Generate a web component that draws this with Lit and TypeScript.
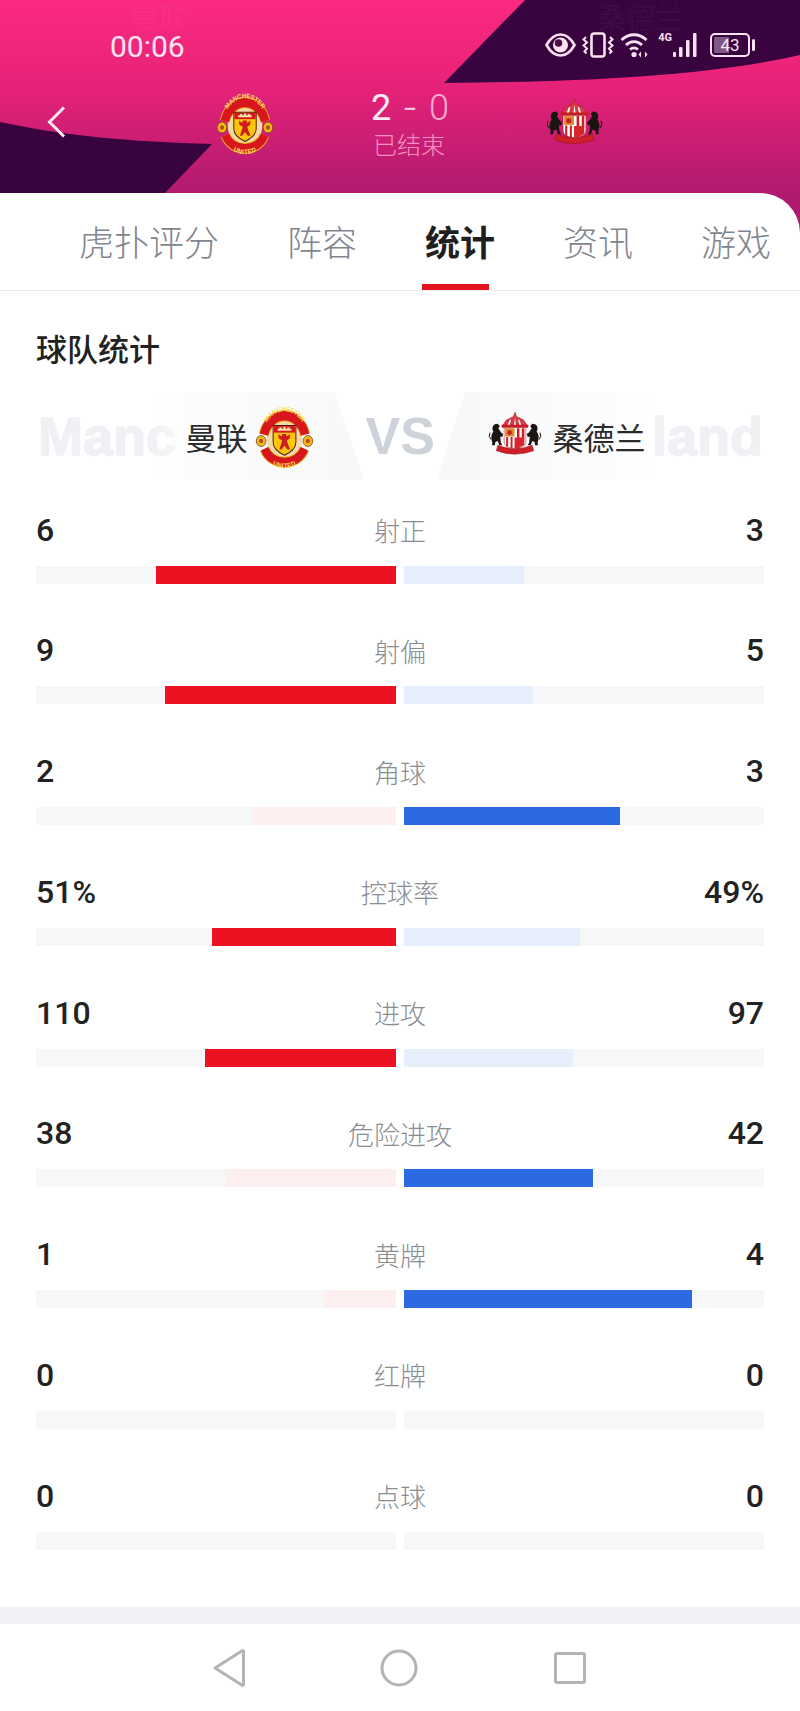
import { LitElement, html, css, svg } from "lit";
import { customElement } from "lit/decorators.js";

const STATS: [string, string, string][] = [
  ["6", "射正", "3"],
  ["9", "射偏", "5"],
  ["2", "角球", "3"],
  ["51%", "控球率", "49%"],
  ["110", "进攻", "97"],
  ["38", "危险进攻", "42"],
  ["1", "黄牌", "4"],
  ["0", "红牌", "0"],
  ["0", "点球", "0"],
];

const muCrest = (id: string) => html`<svg class="crest square" viewBox="0 3 100 88" preserveAspectRatio="none" aria-hidden="true">
  <defs>
    <path id="${id}a" d="M13 47 A37 39 0 0 1 87 47"></path>
    <path id="${id}b" d="M12 62 A38 34 0 0 0 88 62"></path>
  </defs>
  <path d="M9 38 A44 44 0 0 1 91 38" fill="none" stroke="#c9a23a" stroke-width="3" stroke-dasharray="1.500 3"></path>
  <ellipse cx="50" cy="50" rx="31" ry="36" fill="#f4d9a6"></ellipse>
  <path d="M14 44 A37 38 0 0 1 86 44" fill="none" stroke="#e8b322" stroke-width="18"></path>
  <path d="M14 44 A37 38 0 0 1 86 44" fill="none" stroke="#d8161e" stroke-width="15"></path>
  <path d="M15 66 A37 31 0 0 0 85 66" fill="none" stroke="#e8b322" stroke-width="17"></path>
  <path d="M15 66 A37 31 0 0 0 85 66" fill="none" stroke="#d8161e" stroke-width="14"></path>
  <circle cx="9" cy="54" r="8.500" fill="#f0b915" stroke="#7a3d10" stroke-width="1.200"></circle>
  <circle cx="91" cy="54" r="8.500" fill="#f0b915" stroke="#7a3d10" stroke-width="1.200"></circle>
  <circle cx="9" cy="54" r="3.500" fill="#b5481a"></circle>
  <circle cx="91" cy="54" r="3.500" fill="#b5481a"></circle>
  <text font-size="10.500" font-weight="700" fill="#ffe05a" font-family="Liberation Sans, sans-serif"><textPath href="#${id}a" startOffset="50%" text-anchor="middle">MANCHESTER</textPath></text>
  <text font-size="10.500" font-weight="700" fill="#ffe05a" font-family="Liberation Sans, sans-serif" letter-spacing=".8"><textPath href="#${id}b" startOffset="50%" text-anchor="middle">UNITED</textPath></text>
  <path d="M30 30 H70 V56 Q70 68 50 76 Q30 68 30 56 Z" fill="#fbc70b" stroke="#4a1208" stroke-width="1.600"></path>
  <path d="M31 31 H69 V41 H31 Z" fill="#d8161e"></path>
  <path d="M38 38 h24 v-3 h-3 v-2 h-4 v2 h-3 v-3 h-4 v3 h-3 v-2 h-4 v2 h-3 Z" fill="#fbe7a8"></path>
  <path d="M46 43 h7 l1 4 l6 -4 l-1 7 l-5 3 l2 6 l4 8 h-5 l-5 -6 l-5 6 h-4 l3 -8 l2 -6 l-6 -3 l-1 -7 l6 4 Z" fill="#d21b1f"></path>
</svg>`;

const sunCrest = () => html`<svg class="crest" viewBox="0 0 110 88" aria-hidden="true">
  <path d="M55 0 L58 9 L72 16 L80 27 H30 L38 16 L52 9 Z" fill="#d83a45" stroke="#a8141f" stroke-width="1"></path>
  <path d="M44 16h3l-3 11h-4zM55 11l2 16h-4zM64 16h-3l3 11h4z" fill="#fff"></path>
  <rect x="28" y="26" width="54" height="6" rx="1" fill="#c81d25"></rect>
  <path d="M33 32 H77 V62 Q77 72 55 76 Q33 72 33 62 Z" fill="#fff" stroke="#a8141f" stroke-width="1"></path>
  <path d="M35 33 H54 V50 H35 Z" fill="#e08a2a"></path>
  <circle cx="44" cy="42" r="5" fill="#c81d25"></circle>
  <path d="M59 33h5v40h-5zM69 33h5v34h-5zM37 51h4v20h-4zM46 51h4v23h-4z" fill="#cf1c25"></path>
  <path d="M54 52h19v16q-8 6 -19 7z" fill="#d8262d"></path>
  <path d="M9 62 C5 52 7 44 11 40 C8 36 8 28 14 25 L20 24 L24 29 L21 33 C24 38 26 42 31 45 L29 51 L25 50 L26 62 L29 68 H23 L20 59 L15 61 L14 68 H8 Z" fill="#1a1512"></path>
  <path d="M101 62 C105 52 103 44 99 40 C102 36 102 28 96 25 L90 24 L86 29 L89 33 C86 38 84 42 79 45 L81 51 L85 50 L84 62 L81 68 H87 L90 59 L95 61 L96 68 H102 Z" fill="#1a1512"></path>
  <path d="M4 42 q-4 8 2 14M106 42 q4 8 -2 14" fill="none" stroke="#1a1512" stroke-width="2"></path>
  <path d="M20 68 Q55 82 90 68 L93 79 Q55 93 17 79 Z" fill="#d01f28" stroke="#8e1119" stroke-width="1"></path>
</svg>`;

const eye = svg`<svg class="si" width="31" height="24" viewBox="0 0 31 24" aria-hidden="true"><path d="M1.5 12 C6 4 11 1.5 15.500 1.500 C20 1.500 25 4 29.500 12 C25 20 20 22.500 15.500 22.500 C11 22.500 6 20 1.500 12 Z" fill="none" stroke="#fbe2f0" stroke-width="2.600"></path><circle cx="15.500" cy="12" r="7.500" fill="#fbe2f0"></circle><circle cx="13.500" cy="10" r="3.800" fill="#4a0b45"></circle></svg>`;
const vibrate = svg`<svg class="si" width="32" height="26" viewBox="0 0 32 26" aria-hidden="true"><rect x="9.500" y="1.500" width="13" height="23" rx="2.500" fill="none" stroke="#fbe2f0" stroke-width="2.600"></rect><path d="M4 5l-2.500 2.500L5 10.500l-3.500 3L5 16.500l-2.500 3 2 2M28 5l2.500 2.500L27 10.500l3.500 3L27 16.500l2.500 3-2 2" fill="none" stroke="#fbe2f0" stroke-width="2"></path></svg>`;
const wifi = svg`<svg class="si" width="30" height="26" viewBox="0 0 30 26" aria-hidden="true"><path d="M1.500 8 C8.500 1 19.500 1 26.500 8 M6 13 C10.500 8.500 17.500 8.500 22 13 M10 17.500 C12.500 15.500 15.500 15.500 18 17.500" fill="none" stroke="#fbe2f0" stroke-width="2.800"></path><circle cx="14" cy="22.500" r="2.600" fill="#fbe2f0"></circle><path d="M21 19.500v6l-2.500-3zM25 19.500v6l2.500-3z" fill="#fbe2f0"></path></svg>`;
const signal = svg`<svg class="si" width="26" height="26" viewBox="0 0 26 26" aria-hidden="true"><rect x="1" y="20" width="3" height="5" rx="1" fill="#fbe2f0"></rect><rect x="7" y="15" width="3.500" height="10" rx="1" fill="#fbe2f0"></rect><rect x="14" y="8" width="3.500" height="17" rx="1" fill="#fbe2f0"></rect><rect x="21" y="1" width="3.500" height="24" rx="1" fill="#fbe2f0"></rect></svg>`;

const navBack = svg`<svg width="40" height="40" viewBox="0 0 40 40" aria-hidden="true"><path d="M33.500 2.500 L34.500 3 V37 L33.500 37.500 L6 20 Z" transform="translate(1 0)" fill="none" stroke="#b4b4b4" stroke-width="3" stroke-linejoin="round"></path></svg>`;
const navHome = svg`<svg width="40" height="40" viewBox="0 0 40 40" aria-hidden="true"><circle cx="20" cy="20" r="17" fill="none" stroke="#b4b4b4" stroke-width="3"></circle></svg>`;
const navRecent = svg`<svg width="40" height="40" viewBox="0 0 40 40" aria-hidden="true"><rect x="5.500" y="5.500" width="29" height="29" rx="1.500" fill="none" stroke="#b4b4b4" stroke-width="3"></rect></svg>`;

@customElement("app-root")
export class AppRoot extends LitElement {
  static styles = css`
    :host {
      display: block;
      width: 800px;
      background: #fff;
      font-family: "Roboto", "Noto Sans CJK SC", sans-serif;
      color: #222;
    }
    .top {
      position: relative;
      height: 193px;
      overflow: hidden;
      background: linear-gradient(180deg, #fb2a80 0%, #e62278 45%, #b01a6e 100%);
      color: #fcdcee;
    }
    .shape {
      position: absolute;
      left: 0;
      top: 0;
      width: 800px;
      height: 193px;
    }
    .ghost-name {
      position: absolute;
      top: 7px;
      font-size: 29px;
      line-height: 25px;
      color: rgba(255, 255, 255, 0.045);
    }
    .ghost-name.a {
      left: 130px;
    }
    .ghost-name.b {
      left: 597px;
    }
    .status {
      position: relative;
      display: flex;
      align-items: center;
      justify-content: space-between;
      height: 94px;
      padding: 0 45px 0 110px;
      box-sizing: border-box;
    }
    .time {
      font-size: 30px;
      line-height: 30px;
      color: #fce3f1;
    }
    .icons {
      display: flex;
      align-items: center;
      gap: 6px;
      margin-top: -4px;
    }
    .si {
      display: block;
    }
    .net {
      display: flex;
      align-items: flex-end;
      margin-left: 2px;
    }
    .net span {
      font-size: 11px;
      font-weight: 700;
      line-height: 12px;
      align-self: flex-start;
      color: #fbe2f0;
    }
    .battery {
      display: flex;
      align-items: center;
      gap: 2px;
      margin-left: 6px;
    }
    .cell {
      width: 40px;
      height: 24px;
      box-sizing: border-box;
      border: 2px solid #fbe2f0;
      border-radius: 5px;
      display: flex;
      align-items: center;
      justify-content: center;
      font-size: 17px;
      color: #fbe2f0;
      background: linear-gradient(90deg, rgba(251, 226, 240, 0.38) 46%, transparent 46%);
      background-clip: content-box;
      padding: 2px;
    }
    .cap {
      width: 3px;
      height: 12px;
      border-radius: 2px;
      background: #fbe2f0;
    }
    .match {
      position: relative;
      display: flex;
      align-items: flex-start;
      padding-left: 47px;
    }
    .back {
      display: block;
      flex: none;
      margin: 12px 150px 0 0;
    }
    .crest {
      display: block;
      width: 100%;
    }
    .crest.square {
      aspect-ratio: 1;
      overflow: visible;
    }
    .top .mu {
      flex: none;
      width: 56px;
      margin-top: 1px;
    }
    .score {
      flex: none;
      width: 100px;
      margin-left: 86px;
      text-align: center;
    }
    .nums {
      display: flex;
      justify-content: space-between;
      align-items: center;
      padding: 0 10px 0 12px;
      height: 26px;
      font-size: 36px;
      font-weight: 400;
      line-height: 26px;
      margin-top: 1px;
    }
    .n1 {
      color: #fdeaf4;
    }
    .n2 {
      color: #fbc3dd;
      font-size: 44px;
      font-weight: 300;
    }
    .n3 {
      color: #f9aed2;
      font-weight: 300;
    }
    .done {
      margin-top: 9px;
      font-size: 24px;
      line-height: 32px;
      font-weight: 300;
      color: #f78fc3;
    }
    .top .sun-wrap {
      flex: none;
      width: 57px;
      margin: 5px 0 0 87px;
    }
    .tabs-bg {
      background: #b01a6e;
    }
    .tabs {
      display: flex;
      gap: 68px;
      height: 98px;
      box-sizing: border-box;
      padding-left: 79px;
      background: #fff;
      border-top-right-radius: 40px;
      border-bottom: 1px solid #ebecee;
      overflow: hidden;
    }
    .tab {
      position: relative;
      flex: none;
      font-size: 35px;
      line-height: 98px;
      font-weight: 300;
      color: #7f868e;
      height: 91px;
      margin-top: 3px;
    }
    .tab.on {
      color: #1f1f1f;
      font-weight: 700;
    }
    .tab.on::after {
      content: "";
      position: absolute;
      left: -3px;
      bottom: -3px;
      width: 67px;
      height: 6px;
      background: #e2121e;
    }
    .stats {
      padding: 38px 36px 57.5px;
    }
    .title {
      font-size: 31px;
      line-height: 44px;
      font-weight: 500;
      color: #222;
    }
    .vs {
      position: relative;
      margin-top: 19px;
      height: 88px;
      display: grid;
      grid-template-columns: 1fr 69px 1fr;
      align-items: center;
      overflow: hidden;
    }
    .bgword {
      position: absolute;
      top: 50%;
      transform: translateY(-50%);
      font-family: "Liberation Sans", sans-serif;
      font-weight: 700;
      font-size: 54px;
      line-height: 60px;
      color: #eff1f4;
      -webkit-text-stroke: 1.5px #eff1f4;
      white-space: nowrap;
    }
    .bgword.l {
      left: 2px;
    }
    .bgword.r {
      right: 1px;
    }
    .wedge {
      position: absolute;
      top: 0;
      bottom: 0;
    }
    .wedge.l {
      left: 115px;
      width: 213px;
      background: linear-gradient(90deg, rgba(251, 252, 253, 0), #fbfcfd 26%, #f7f8fa 100%);
      clip-path: polygon(0 0, 86% 0, 100% 100%, 0 100%);
    }
    .wedge.r {
      left: 401px;
      width: 214px;
      background: linear-gradient(270deg, rgba(251, 252, 253, 0), #fbfcfd 26%, #f7f8fa 100%);
      clip-path: polygon(13% 0, 100% 0, 100% 100%, 0 100%);
    }
    .team {
      position: relative;
      display: flex;
      align-items: center;
      font-size: 31px;
      color: #2b2b2b;
    }
    .team.l {
      justify-content: flex-end;
      gap: 8px;
      padding-right: 53px;
    }
    .team.r {
      gap: 11px;
      padding-left: 53px;
    }
    .team .mu {
      flex: none;
      width: 57px;
    }
    .team .sun-wrap {
      flex: none;
      width: 54px;
      margin-top: -4px;
    }
    .vsword {
      position: relative;
      font-family: "Liberation Sans", sans-serif;
      font-weight: 700;
      font-size: 52px;
      color: #ced2d9;
      text-align: center;
      line-height: 60px;
    }
    .rows {
      display: flex;
      flex-direction: column;
      gap: 44.75px;
      margin-top: 27.5px;
    }
    .head {
      display: grid;
      grid-template-columns: 1fr auto 1fr;
      align-items: center;
      height: 44px;
      font-size: 32px;
      font-weight: 500;
      color: #222;
    }
    .head .b {
      text-align: right;
    }
    .label {
      font-size: 26px;
      font-weight: 300;
      color: #8a8d92;
    }
    .bars {
      display: grid;
      grid-template-columns: 1fr 1fr;
      gap: 8px;
      margin-top: 14px;
    }
    .track {
      display: flex;
      height: 18px;
      background: #f6f7f9;
    }
    .track.l {
      justify-content: flex-end;
    }
    .fill.red {
      background: #ec1222;
    }
    .fill.red.dim {
      background: #fdeef0;
    }
    .fill.blue {
      background: #2c6ae2;
    }
    .fill.blue.dim {
      background: #e8effc;
    }
    .band {
      height: 17px;
      background: #f0f1f5;
    }
    .nav {
      display: flex;
      justify-content: center;
      align-items: center;
      gap: 131px;
      height: 87px;
      margin-left: -2px;
    }
    .nav svg {
      display: block;
    }
  `;

  private row([a, label, b]: [string, string, string]) {
    const x = parseFloat(a);
    const y = parseFloat(b);
    const sum = x + y;
    const pa = sum ? (x / sum) * 100 : 0;
    const pb = sum ? (y / sum) * 100 : 0;
    return html`<div class="row">
      <div class="head"><span>${a}</span><span class="label">${label}</span><span class="b">${b}</span></div>
      <div class="bars">
        <div class="track l"><div class="fill red ${x >= y ? "" : "dim"}" style="width:${pa}%"></div></div>
        <div class="track"><div class="fill blue ${y > x ? "" : "dim"}" style="width:${pb}%"></div></div>
      </div>
    </div>`;
  }

  render() {
    const tabs = ["虎扑评分", "阵容", "统计", "资讯", "游戏"];
    return html`
      <header class="top">
        <svg class="shape" viewBox="0 0 800 193" aria-hidden="true">
          <path d="M525 0 L444 83 C560 82 700 78 800 55 V0 Z" fill="#38033f"></path>
          <path d="M0 122 C60 135 130 142 212 144 L165 193 H0 Z" fill="#38033f"></path>
        </svg>
        <span class="ghost-name a">曼联</span>
        <span class="ghost-name b">桑德兰</span>
        <div class="status">
          <span class="time">00:06</span>
          <div class="icons">
            ${eye}${vibrate}${wifi}
            <div class="net"><span>4G</span>${signal}</div>
            <div class="battery"><div class="cell">43</div><div class="cap"></div></div>
          </div>
        </div>
        <div class="match">
          <svg class="back" width="20" height="32" viewBox="0 0 20 32" aria-hidden="true"><path d="M17 1.500 L2.500 16 L17 30.500" fill="none" stroke="#fdeaf4" stroke-width="3"></path></svg>
          <div class="mu">${muCrest("h")}</div>
          <div class="score">
            <div class="nums"><span class="n1">2</span><span class="n2">-</span><span class="n3">0</span></div>
            <div class="done">已结束</div>
          </div>
          <div class="sun-wrap">${sunCrest()}</div>
        </div>
      </header>
      <div class="tabs-bg">
        <nav class="tabs">
          ${tabs.map((t) => html`<div class="tab ${t === "统计" ? "on" : ""}">${t}</div>`)}
        </nav>
      </div>
      <section class="stats">
        <div class="title">球队统计</div>
        <div class="vs">
          <span class="bgword l">Manc</span>
          <span class="bgword r">land</span>
          <div class="wedge l"></div>
          <div class="wedge r"></div>
          <div class="team l"><span>曼联</span><div class="mu">${muCrest("s")}</div></div>
          <div class="vsword">VS</div>
          <div class="team r"><div class="sun-wrap">${sunCrest()}</div><span>桑德兰</span></div>
        </div>
        <div class="rows">${STATS.map((s) => this.row(s))}</div>
      </section>
      <div class="band"></div>
      <footer class="nav">${navBack}${navHome}${navRecent}</footer>
    `;
  }
}
